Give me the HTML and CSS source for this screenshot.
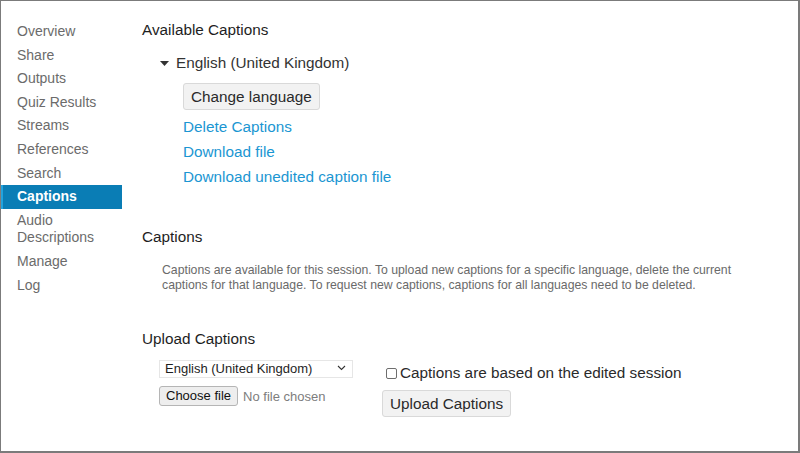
FILE: index.html
```html
<!DOCTYPE html>
<html lang="en">
<head>
<meta charset="utf-8">
<title>Captions</title>
<link rel="stylesheet" href="styles.css">
</head>
<body>
<div class="frame">
  <nav class="sidebar">
    <a class="nav-item">Overview</a>
    <a class="nav-item">Share</a>
    <a class="nav-item">Outputs</a>
    <a class="nav-item">Quiz Results</a>
    <a class="nav-item">Streams</a>
    <a class="nav-item">References</a>
    <a class="nav-item">Search</a>
    <a class="nav-item active">Captions</a>
    <a class="nav-item">Audio Descriptions</a>
    <a class="nav-item">Manage</a>
    <a class="nav-item">Log</a>
  </nav>
  <main class="main">
    <h2 class="heading first">Available Captions</h2>
    <div class="lang-row">
      <svg class="caret" width="9" height="5" viewBox="0 0 9 5"><path d="M0 0H9L4.5 5Z" fill="#333"/></svg>
      <span>English (United Kingdom)</span>
    </div>
    <div class="lang-body">
      <button class="btn btn-lg">Change language</button>
      <a class="link link-first">Delete Captions</a>
      <a class="link">Download file</a>
      <a class="link">Download unedited caption file</a>
    </div>

    <h2 class="heading captions-h">Captions</h2>
    <p class="note">Captions are available for this session. To upload new captions for a specific language, delete the current captions for that language. To request new captions, captions for all languages need to be deleted.</p>

    <h2 class="heading upload-h">Upload Captions</h2>
    <div class="upload">
      <div class="upload-left">
        <div class="select-wrap">
          <select class="select"><option>English (United Kingdom)</option></select>
          <svg class="chev" width="9" height="6" viewBox="0 0 9 6"><path d="M1 1L4.5 4.5L8 1" fill="none" stroke="#333" stroke-width="1.1"/></svg>
        </div>
        <div class="file-row">
          <button class="btn btn-sm">Choose file</button>
          <span class="nofile">No file chosen</span>
        </div>
      </div>
      <div class="upload-right">
        <label class="check-row"><span class="checkbox"></span>Captions are based on the edited session</label>
        <button class="btn btn-lg btn-upload">Upload Captions</button>
      </div>
    </div>
  </main>
</div>
</body>
</html>
```

FILE: styles.css
```css
* { box-sizing: border-box; }
html, body { margin: 0; padding: 0; background: #fff; }
body { font-family: "Liberation Sans", Arial, sans-serif; }

.frame {
  width: 800px;
  height: 453px;
  border-style: solid;
  border-color: #7b7b7b;
  border-width: 1px 2px 2px 1px;
  display: flex;
  overflow: hidden;
}

.sidebar {
  width: 121px;
  flex: none;
  padding-top: 19px;
  display: flex;
  flex-direction: column;
}
.nav-item {
  display: block;
  font-size: 14px;
  line-height: 17.6px;
  padding: 3px 6px 3px 16px;
  color: #6b6b6b;
}
.nav-item.active {
  background: #0a7db5;
  color: #fff;
  font-weight: bold;
  border-left: 2px solid #22a3de;
  padding-left: 14px;
}

.main {
  flex: 1;
  padding-left: 20px;
  color: #333;
}
.heading {
  margin: 0;
  font-size: 15.3px;
  font-weight: normal;
  line-height: 18px;
  color: #1e1e1e;
}
.heading.first { margin-top: 20px; }
.captions-h { margin-top: 39px; }
.upload-h { margin-top: 37px; }

.lang-row {
  margin-top: 15px;
  padding-left: 18px;
  display: flex;
  align-items: center;
  font-size: 15.3px;
  line-height: 18px;
  color: #333;
}
.caret { margin-right: 7px; }

.lang-body {
  padding-left: 41px;
  display: flex;
  flex-direction: column;
  align-items: flex-start;
}

.btn {
  font-family: "Liberation Sans", Arial, sans-serif;
  color: #2a2a2a;
  background: #f2f2f2;
  border: 1px solid #d9d9d9;
  border-radius: 3px;
  margin: 0;
}
.btn-lg {
  font-size: 15.3px;
  line-height: 17px;
  height: 27px;
  padding: 0 7px;
  margin-top: 11px;
}
.link {
  display: block;
  font-size: 15.3px;
  line-height: 25px;
  color: #1b96d2;
}
.link-first { margin-top: 4px; }

.note {
  margin: 17px 0 0 20px;
  width: 590px;
  font-size: 12.25px;
  line-height: 15px;
  color: #6a6a6a;
}

.upload {
  display: flex;
  margin-top: 11px;
  padding-left: 17px;
}
.upload-left { width: 223px; }
.select-wrap {
  position: relative;
  width: 194px;
  height: 18px;
}
.select {
  appearance: none;
  -webkit-appearance: none;
  width: 194px;
  height: 18px;
  margin: 0;
  padding: 0 0 0 5px;
  font-family: "Liberation Sans", Arial, sans-serif;
  font-size: 13px;
  line-height: 16px;
  color: #1e1e1e;
  background: #fff;
  border: 1px solid #e6e6e6;
  border-radius: 0;
}
.chev {
  position: absolute;
  right: 7px;
  top: 6px;
  pointer-events: none;
}
.file-row {
  margin-top: 9px;
  display: flex;
  align-items: center;
}
.btn-sm {
  font-size: 13px;
  line-height: 16px;
  padding: 1px 6px;
  height: 20px;
  border-color: #b5b5b5;
  background: #eeeeee;
  color: #111;
}
.nofile {
  margin-left: 5px;
  font-size: 13px;
  color: #7d7d7d;
}

.upload-right {
  display: flex;
  flex-direction: column;
  align-items: flex-start;
}
.check-row {
  display: flex;
  align-items: center;
  margin-top: 5px;
  padding-left: 4px;
  font-size: 15.3px;
  line-height: 18px;
  color: #2a2a2a;
}
.checkbox {
  width: 11px;
  height: 11px;
  border: 1px solid #6e6e6e;
  border-radius: 2px;
  margin-right: 3px;
  background: #fff;
}
.btn-upload { margin-top: 8px; }
```
